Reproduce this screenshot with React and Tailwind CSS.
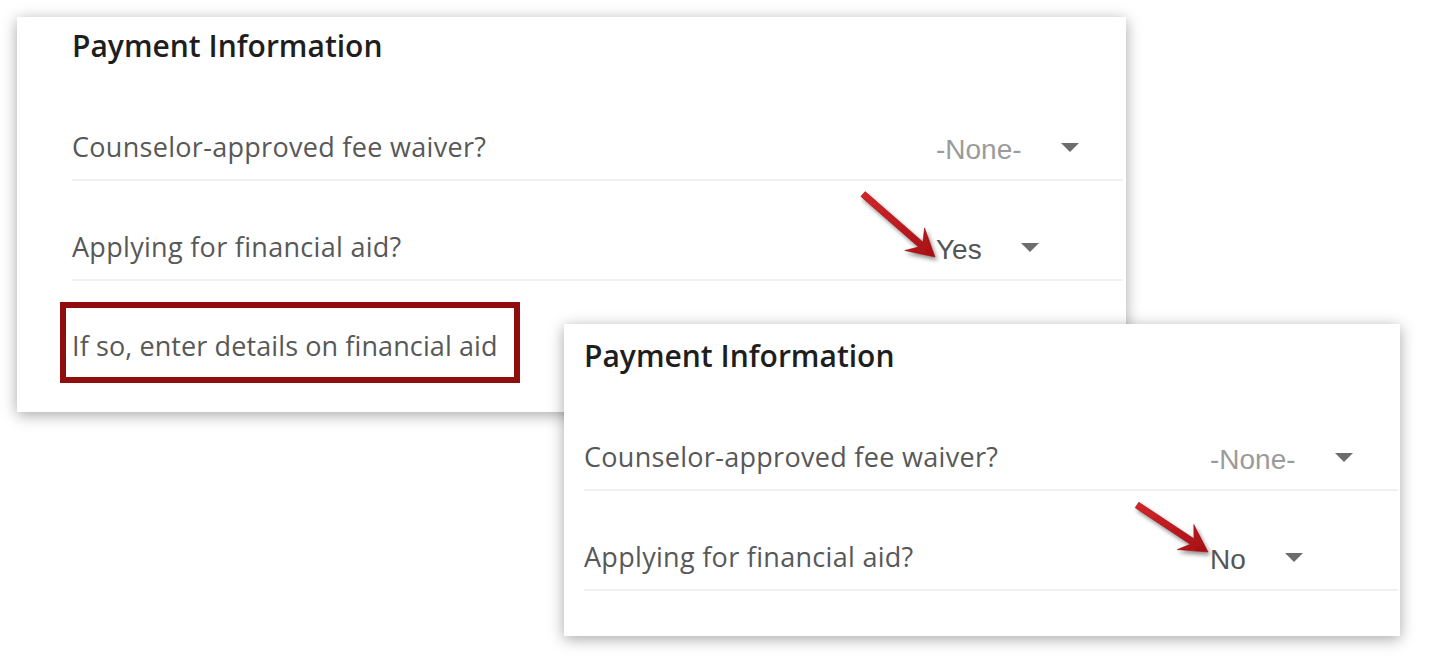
import React from "react";

function Caret() {
  return (
    <svg width="18" height="9" viewBox="0 0 18 9" className="mb-[5px] ml-[39px] shrink-0">
      <polygon points="0,0 18,0 9,9" fill="#6d6d6d" />
    </svg>
  );
}

// red callout arrow, drawn from tail (x1,y1) to tip (x2,y2)
function Arrow({ x1, y1, x2, y2, id }) {
  const dx = x2 - x1;
  const dy = y2 - y1;
  const len = Math.hypot(dx, dy);
  const ux = dx / len;
  const uy = dy / len;
  const nx = -uy;
  const ny = ux;
  const pt = (back, side) =>
    `${(x2 - ux * back + nx * side).toFixed(1)},${(y2 - uy * back + ny * side).toFixed(1)}`;
  const points = [
    pt(0, 0),
    pt(27, 15),
    pt(19, 3.4),
    pt(len, 3.2),
    pt(len, -3.2),
    pt(19, -3.4),
    pt(27, -15),
  ].join(" ");

  return (
    <svg className="pointer-events-none absolute left-0 top-0 h-full w-full overflow-visible">
      <defs>
        <linearGradient id={`g-${id}`} x1="0" y1="0" x2="1" y2="1">
          <stop offset="0" stopColor="#d5262b" />
          <stop offset="1" stopColor="#a50f15" />
        </linearGradient>
        <filter id={`s-${id}`} x="-20%" y="-20%" width="140%" height="140%">
          <feDropShadow dx="2" dy="3" stdDeviation="2" floodColor="#000" floodOpacity="0.45" />
        </filter>
      </defs>
      <polygon
        points={points}
        fill={`url(#g-${id})`}
        stroke="#9a0d12"
        strokeWidth="0.6"
        strokeLinejoin="round"
        filter={`url(#s-${id})`}
      />
    </svg>
  );
}

function Row({ label, value, muted, valueCol }) {
  return (
    <div className="flex h-[100px] items-start border-b-2 border-[#f1f1f1] pt-[52px]">
      <span className="flex-1 text-[27px] leading-none tracking-[0.3px] text-[#585858]">{label}</span>
      <div className={`flex ${valueCol} items-center pt-[3px]`}>
        <span
          className={`font-['Liberation_Sans',Arial,sans-serif] text-[28px] leading-none ${
            muted ? "text-[#9b9b9b]" : "text-[#555]"
          }`}
        >
          {value}
        </span>
        <Caret />
      </div>
    </div>
  );
}

export default function App() {
  return (
    <div className="min-h-screen bg-white p-[17px] font-['Open_Sans','Noto_Sans',sans-serif] [font-variant-ligatures:none]">
      {/* first view: financial aid = Yes, details field shown */}
      <div className="relative h-[395px] w-[1109px] bg-white pl-[55px] pr-[3px] shadow-[0_3px_14px_rgba(0,0,0,0.35)]">
        <div className="h-[64px] pt-[14px]">
          <h2 className="text-[30px] font-semibold leading-none text-[#1e1e1e]">
            Payment Information
          </h2>
        </div>
        <Row label="Counselor-approved fee waiver?" value="-None-" muted valueCol="w-[187px]" />
        <Row label="Applying for financial aid?" value="Yes" valueCol="w-[187px]" />
        <div className="pt-[21px]">
          <div className="-ml-[12px] flex h-[81px] w-[460px] items-center border-[6px] border-[#8f0d0d] pl-[6px] pt-[5px]">
            <span className="whitespace-nowrap text-[27px] leading-none tracking-[0.1px] text-[#585858]">
              If so, enter details on financial aid
            </span>
          </div>
        </div>
        <Arrow id="a" x1={846} y1={177} x2={918} y2={240} />
      </div>

      {/* second view: financial aid = No, details field hidden */}
      <div className="relative -mt-[88px] ml-[547px] h-[312px] w-[836px] bg-white pl-[20px] pr-[2px] shadow-[0_3px_14px_rgba(0,0,0,0.35)]">
        <div className="h-[67px] pt-[17px]">
          <h2 className="text-[30px] font-semibold leading-none text-[#1e1e1e]">
            Payment Information
          </h2>
        </div>
        <Row label="Counselor-approved fee waiver?" value="-None-" muted valueCol="w-[188px]" />
        <Row label="Applying for financial aid?" value="No" valueCol="w-[188px]" />
        <Arrow id="b" x1={573} y1={181} x2={644} y2={228} />
      </div>
    </div>
  );
}
